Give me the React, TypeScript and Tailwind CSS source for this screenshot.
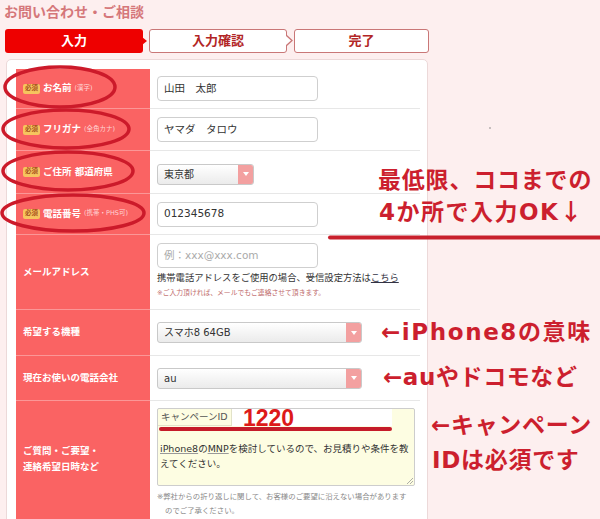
import React from "react";

const formFont = "font-['DejaVu_Sans','Noto_Sans_CJK_JP',sans-serif]";
const noteFont = "font-['DejaVu_Sans','Noto_Sans_CJK_JP',sans-serif] font-bold text-[#cc1f2e] leading-none";

function Badge() {
  return (
    <span className="mr-[3px] inline-flex h-[10px] w-[17px] items-center justify-center rounded-[2px] bg-[#f6c55e] text-[6.5px] font-bold text-[#a8521f]">
      必須
    </span>
  );
}

function Label({ text, sub, required }: { text: string; sub?: string; required?: boolean }) {
  return (
    <div className="flex items-center text-white">
      {required && <Badge />}
      <span className="text-[9.5px] font-bold">{text}</span>
      {sub && <span className="ml-[3px] text-[6.5px] text-[#ffd6d6]">{sub}</span>}
    </div>
  );
}

function Select({ value, width }: { value: string; width: string }) {
  return (
    <div
      className={`flex h-[21px] ${width} items-stretch overflow-hidden rounded-[3px] border border-[#c9c9c9] bg-gradient-to-b from-white to-[#ebebeb]`}
    >
      <div className="flex flex-1 items-center pl-[6px] text-[10px] text-[#333]">{value}</div>
      <div className="flex w-[15px] items-center justify-center bg-[#f3a0a0]">
        <svg width="6" height="4" viewBox="0 0 6 4">
          <path d="M0 0h6L3 4z" fill="#fff" />
        </svg>
      </div>
    </div>
  );
}

function Input({ value, placeholder }: { value?: string; placeholder?: string }) {
  return (
    <div className="flex h-[25px] w-[161px] items-center rounded-[4px] border border-[#cfcfcf] bg-white pl-[6px] text-[10.5px]">
      {value ? <span className="text-[#333]">{value}</span> : <span className="text-[#aaa]">{placeholder}</span>}
    </div>
  );
}

function Row({
  h,
  label,
  children,
  align = "items-center",
}: {
  h: string;
  label: React.ReactNode;
  children: React.ReactNode;
  align?: string;
}) {
  return (
    <div className={`flex ${h}`}>
      <div className="flex w-[134px] shrink-0 items-center border-b border-[#fb9797] bg-[#fa6363] pl-[7px]">
        {label}
      </div>
      <div className={`flex flex-1 ${align} border-b border-[#e7e7e7] pl-[7px]`}>{children}</div>
    </div>
  );
}

export default function App() {
  return (
    <div className={`relative h-[519px] w-[600px] overflow-hidden bg-[#fdefef] ${formFont}`}>
      <div className="w-[430px]">
        <h1 className="pl-[4px] pt-[4px] text-[14px] font-bold leading-[17px] text-[#d5777a]">
          お問い合わせ・ご相談
        </h1>

        {/* steps */}
        <div className="mt-[8px] flex h-[24px] pl-[5px]">
          <div className="relative flex w-[138px] items-center justify-center rounded-[3px] bg-[#ee0000] text-[13px] font-bold text-white">
            入力
            <svg className="absolute right-[-5px] top-[8px]" width="6" height="8" viewBox="0 0 6 8">
              <path d="M0 0l5 4-5 4z" fill="#ee0000" />
            </svg>
          </div>
          <div className="relative ml-[6px] flex w-[138px] items-center justify-center rounded-[3px] border-[1.5px] border-[#c97777] bg-white text-[13px] font-bold text-[#b22626]">
            入力確認
            <svg className="absolute right-[-7px] top-[5px]" width="7" height="11" viewBox="0 0 7 11">
              <path d="M0 0l6 5.5L0 11" fill="#fff" stroke="#c97777" strokeWidth="1.3" />
            </svg>
          </div>
          <div className="ml-[7px] flex w-[135px] items-center justify-center rounded-[3px] border-[1.5px] border-[#c97777] bg-white text-[13px] font-bold text-[#b22626]">
            完了
          </div>
        </div>

        {/* form panel */}
        <div className="ml-[6px] mt-[6px] w-[422px] rounded-[5px] border border-[#ecd9d9] bg-white pb-[10px] pl-[9px] pr-[7px] pt-[9px]">
          <Row h="h-[40px]" label={<Label required text="お名前" sub="(漢字)" />}>
            <Input value="山田　太郎" />
          </Row>
          <Row h="h-[42px]" label={<Label required text="フリガナ" sub="(全角カナ)" />}>
            <Input value="ヤマダ　タロウ" />
          </Row>
          <Row h="h-[43px]" label={<Label required text="ご住所 都道府県" />}>
            <div className="pt-[4px]">
              <Select value="東京都" width="w-[97px]" />
            </div>
          </Row>
          <Row h="h-[41px]" label={<Label required text="電話番号" sub="(携帯・PHS可)" />}>
            <Input value="012345678" />
          </Row>
          <Row h="h-[75px]" align="items-start" label={<Label text="メールアドレス" />}>
            <div className="pt-[8px]">
              <Input placeholder="例：xxx@xxx.com" />
              <p className="mt-[4px] text-[9.3px] leading-[12px] text-[#333]">
                携帯電話アドレスをご使用の場合、受信設定方法は
                <span className="text-[#334] underline">こちら</span>
              </p>
              <p className="mt-[5px] text-[6.8px] leading-[9px] text-[#c06a6a]">
                ※ご入力頂ければ、メールでもご連絡させて頂きます。
              </p>
            </div>
          </Row>
          <Row h="h-[46px]" label={<Label text="希望する機種" />}>
            <Select value="スマホ8 64GB" width="w-[205px]" />
          </Row>
          <Row h="h-[45px]" label={<Label text="現在お使いの電話会社" />}>
            <Select value="au" width="w-[205px]" />
          </Row>
          <Row
            h="h-[130px]"
            align="items-start"
            label={
              <div className="-mt-[14px] text-[9.5px] font-bold leading-[16px] text-white">
                ご質問・ご要望・
                <br />
                連絡希望日時など
              </div>
            }
          >
            <div className="pt-[7px]">
              <div className="relative h-[78px] w-[258px] rounded-[2px] border border-[#cdcdcd] bg-[#fdfde2]">
                <div className="flex h-[17px]">
                  <div className="flex w-[74px] items-center border-b border-r border-[#e2e2c8] pl-[3px] text-[9.5px] text-[#555]">
                    キャンペーンID
                  </div>
                  <div className="relative w-[160px] bg-white">
                    <span className="absolute left-[11px] top-[-8px] font-['Liberation_Sans',sans-serif] text-[23px] font-bold text-[#dd1a1a]">
                      1220
                    </span>
                  </div>
                </div>
                <div className="ml-[1px] mt-[1px] h-[4px] w-[233px] rounded-full bg-[#c51b29]" />
                <div className="px-[2px] pt-[10px] text-[9.5px] leading-[15px] text-[#333]">
                  <div className="flex whitespace-nowrap">
                    <span className="underline decoration-[#999]">iPhone8</span>
                    <span>の</span>
                    <span className="underline decoration-[#999]">MNP</span>
                    <span>を検討しているので、お見積りや条件を教</span>
                  </div>
                  <div>えてください。</div>
                </div>
                <svg className="absolute bottom-[1px] right-[1px]" width="6" height="6" viewBox="0 0 6 6">
                  <path d="M6 0L0 6M6 3L3 6" stroke="#999" strokeWidth="0.8" />
                </svg>
              </div>
              <p className="mt-[4px] text-[7.4px] leading-[14px] text-[#888]">
                ※弊社からの折り返しに関して、お客様のご要望に沿えない場合があります
                <br />
                <span className="pl-[8px]">のでご了承ください。</span>
              </p>
            </div>
          </Row>
        </div>
      </div>

      {/* hand-drawn annotations */}
      <svg className="pointer-events-none absolute left-0 top-0" width="600" height="519" viewBox="0 0 600 519">
        <g fill="none" stroke="#cc1a2a" strokeWidth="3.5">
          <ellipse cx="60" cy="87" rx="55" ry="20" />
          <ellipse cx="66" cy="129" rx="63" ry="19" />
          <ellipse cx="68" cy="171" rx="65" ry="19" />
          <ellipse cx="73" cy="213" rx="71" ry="18" />
        </g>
        <path d="M330 237.5H600" stroke="#c8202c" strokeWidth="4" strokeLinecap="round" />
        <circle cx="490" cy="128" r="0.7" fill="#666" />
      </svg>

      <div className={`absolute left-[378px] top-[169px] text-[23px] tracking-[0.8px] ${noteFont}`}>最低限、ココまでの</div>
      <div className={`absolute left-[379px] top-[199px] text-[23px] tracking-[1.5px] ${noteFont}`}>
        4か所で入力OK<span className="font-['Noto_Sans_CJK_JP',sans-serif]">↓</span>
      </div>
      <div className={`absolute left-[381px] top-[321px] text-[23px] tracking-[1.6px] ${noteFont}`}>←iPhone8の意味</div>
      <div className={`absolute left-[383px] top-[366px] text-[23px] tracking-[0.6px] ${noteFont}`}>←auやドコモなど</div>
      <div className={`absolute left-[431px] top-[414px] text-[23px] tracking-[0.7px] ${noteFont}`}>←キャンペーン</div>
      <div className={`absolute left-[432px] top-[449px] text-[23px] tracking-[0.7px] ${noteFont}`}>IDは必須です</div>
    </div>
  );
}
